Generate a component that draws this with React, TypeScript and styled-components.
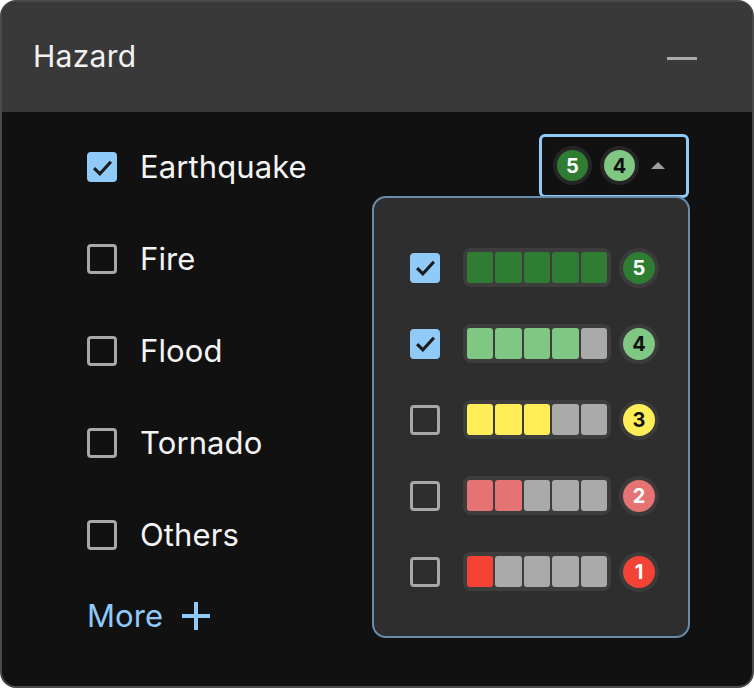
import React, { useState } from "react";
import styled, { createGlobalStyle } from "styled-components";

const Global = createGlobalStyle`
  html, body { margin: 0; padding: 0; background: #ffffff; }
  body { font-family: Inter, "Noto Sans", sans-serif; }
  * { box-sizing: border-box; }
`;

const Card = styled.div`
  width: 754px;
  height: 688px;
  border: 2px solid #4a4a4a;
  border-radius: 16px;
  overflow: hidden;
  background: #111111;
  display: flex;
  flex-direction: column;
`;

const Header = styled.div`
  height: 110px;
  background: #393939;
  display: flex;
  align-items: center;
  justify-content: space-between;
  padding: 0 55px 0 31px;
  flex-shrink: 0;
`;

const Title = styled.div`
  color: #f2f2f2;
  font-size: 30px;
  font-weight: 400;
  letter-spacing: 0.3px;
  margin-top: -3px;
`;

const Minus = styled.div`
  width: 30px;
  height: 3px;
  background: #aaaaaa;
  margin-top: 3px;
`;

const Body = styled.div`
  flex: 1;
  display: flex;
  flex-direction: column;
  padding: 32px 63px 0 85px;
  gap: 46px;
`;

const Row = styled.div`
  height: 46px;
  display: flex;
  align-items: center;
  position: relative;
`;

const Box = styled.div<{ $checked?: boolean; $size?: number }>`
  width: ${(p) => p.$size ?? 30}px;
  height: ${(p) => p.$size ?? 30}px;
  border-radius: 4px;
  flex-shrink: 0;
  display: flex;
  align-items: center;
  justify-content: center;
  background: ${(p) => (p.$checked ? "#90caf9" : "transparent")};
  border: ${(p) => (p.$checked ? "none" : "3px solid #a8a8a8")};
`;

const Label = styled.span`
  color: #f4f4f4;
  font-size: 31px;
  margin-left: 23px;
  letter-spacing: 0.1px;
  margin-top: -1px;
`;

const More = styled.div`
  display: flex;
  align-items: center;
  gap: 18px;
  color: #90caf9;
  font-size: 31px;
  margin-top: -7px;
  letter-spacing: 0.1px;
`;

const Select = styled.div`
  margin-left: auto;
  width: 150px;
  height: 64px;
  border: 3px solid #90caf9;
  border-radius: 6px;
  display: flex;
  align-items: center;
  padding: 0 12px;
  gap: 10px;
  position: relative;
  margin-top: -3px;
  flex-shrink: 0;
`;

const Chip = styled.div<{ $bg: string; $fg: string; $ring: string; $size: number }>`
  width: ${(p) => p.$size}px;
  height: ${(p) => p.$size}px;
  border-radius: 50%;
  background: ${(p) => p.$bg};
  color: ${(p) => p.$fg};
  box-shadow: 0 0 0 4px ${(p) => p.$ring};
  display: flex;
  align-items: center;
  justify-content: center;
  font-weight: 700;
  font-size: 20px;
  flex-shrink: 0;
`;

const ChipWrap = styled.div`
  padding: 3px;
  display: flex;
`;

const Caret = styled.div`
  width: 0;
  height: 0;
  border-left: 7px solid transparent;
  border-right: 7px solid transparent;
  border-bottom: 7px solid #9e9e9e;
  margin-left: 3px;
`;

const Panel = styled.div`
  position: absolute;
  top: calc(100% + 1px);
  right: -4px;
  width: 318px;
  height: 442px;
  background: #2e2e2e;
  border: 2px solid #6a8cab;
  border-radius: 14px;
  padding: 32px 30px 0 36px;
  display: flex;
  flex-direction: column;
  z-index: 2;
`;

const Level = styled.div`
  height: 76px;
  display: flex;
  align-items: center;
`;

const Bar = styled.div`
  margin-left: 23px;
  width: 148px;
  height: 39px;
  flex-shrink: 0;
  background: #3d3d3d;
  border-radius: 8px;
  padding: 4px;
  display: flex;
  gap: 2px;
`;

const Cell = styled.div<{ $color: string }>`
  flex: 1;
  border-radius: 3px;
  background: ${(p) => p.$color};
`;

const BadgeSlot = styled.div`
  margin-left: 8px;
  padding: 4px;
  display: flex;
  flex-shrink: 0;
`;

const Check = () => (
  <svg width="21" height="17" viewBox="0 0 20 16">
    <path d="M2 8.5 L7.5 14 L18 2.5" fill="none" stroke="#1c1c1c" strokeWidth="3" />
  </svg>
);

const levels = [
  { n: 5, color: "#2e7d32", fg: "#ffffff", checked: true },
  { n: 4, color: "#81c784", fg: "#111111", checked: true },
  { n: 3, color: "#ffee58", fg: "#111111", checked: false },
  { n: 2, color: "#e57373", fg: "#ffffff", checked: false },
  { n: 1, color: "#f44336", fg: "#ffffff", checked: false },
];

const hazards = ["Earthquake", "Fire", "Flood", "Tornado", "Others"];

export default function App() {
  const [checked] = useState<Record<string, boolean>>({ Earthquake: true });
  return (
    <>
      <Global />
      <Card>
        <Header>
          <Title>Hazard</Title>
          <Minus />
        </Header>
        <Body>
          {hazards.map((h, i) => (
            <Row key={h}>
              <Box $checked={!!checked[h]}>{checked[h] && <Check />}</Box>
              <Label>{h}</Label>
              {i === 0 && (
                <Select>
                  <ChipWrap>
                    <Chip $size={31} $bg="#2e7d32" $fg="#ffffff" $ring="#262626">5</Chip>
                  </ChipWrap>
                  <ChipWrap>
                    <Chip $size={31} $bg="#81c784" $fg="#111111" $ring="#262626">4</Chip>
                  </ChipWrap>
                  <Caret />
                  <Panel>
                    {levels.map((l) => (
                      <Level key={l.n}>
                        <Box $checked={l.checked} $size={30}>{l.checked && <Check />}</Box>
                        <Bar>
                          {[0, 1, 2, 3, 4].map((k) => (
                            <Cell key={k} $color={k < l.n ? l.color : "#aaaaaa"} />
                          ))}
                        </Bar>
                        <BadgeSlot>
                          <Chip $size={32} $bg={l.color} $fg={l.fg} $ring="#3b3b3b">{l.n}</Chip>
                        </BadgeSlot>
                      </Level>
                    ))}
                  </Panel>
                </Select>
              )}
            </Row>
          ))}
          <More>
            More
            <svg width="30" height="30" viewBox="0 0 30 30">
              <path d="M15 1 V29 M1 15 H29" stroke="#90caf9" strokeWidth="4" />
            </svg>
          </More>
        </Body>
      </Card>
    </>
  );
}
